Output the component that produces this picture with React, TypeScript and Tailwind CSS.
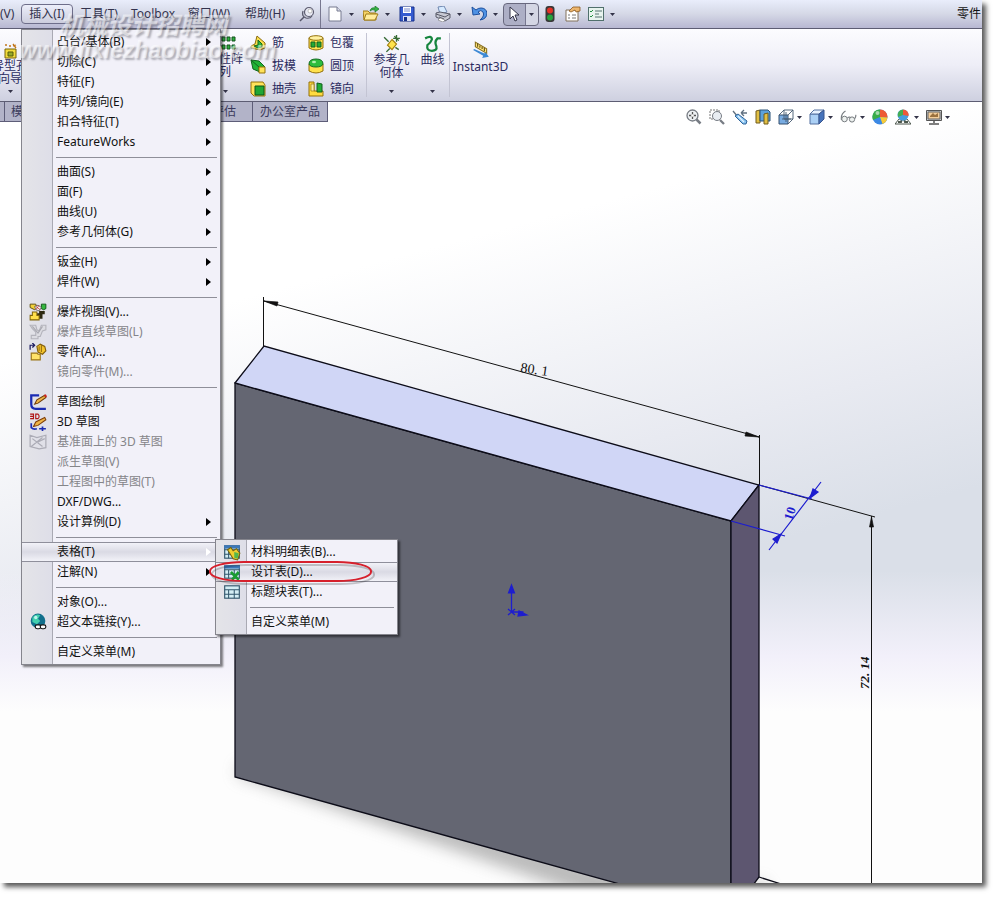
import type { ReactNode } from 'react';

type MenuEntry = {
  label: string;
  icon?: ReactNode;
  arrow?: boolean;
  disabled?: boolean;
  active?: boolean;
  children?: (MenuEntry | null)[];
};

function Svg({ children, className = 'size-4' }: { children: ReactNode; className?: string }) {
  return (
    <svg viewBox="0 0 16 16" className={`${className} shrink-0`} fill="none" aria-hidden="true">
      {children}
    </svg>
  );
}

function Caret() {
  return (
    <svg viewBox="0 0 5 3" className="h-[3px] w-[5px] shrink-0" aria-hidden="true">
      <path d="M0 0h5L2.5 3z" fill="#333348" />
    </svg>
  );
}

/* ---------- menu icons ---------- */

const explodeView = (
  <Svg className="size-[18px]">
    <path d="M9 7h5v3h-2v4H7V9h2z" fill="#2d2a12" />
    <path d="M1 1h5l1 3-2 2-4-2z" fill="#f2d23a" stroke="#5a4708" strokeWidth=".8" />
    <path d="M11 1h4v4l-2 1-2-1z" fill="#35b83f" stroke="#0b5413" strokeWidth=".8" />
    <path d="M3 8h4v3h2v4H1v-4h2z" fill="#ffe04a" stroke="#80640a" strokeWidth=".9" />
    <path d="M5 3l3-1 3 2-2 3-3-1z" fill="#f4f4f4" stroke="#555" strokeWidth=".7" />
    <path d="M6 3l4 3M9 2L6 6" stroke="#b33" strokeWidth=".7" />
  </Svg>
);

const explodeLine = (
  <Svg className="size-[18px]">
    <path d="M1 2h5l1 4 2 1 2-5h4v4l-3 1-2 5H8v2H2v-3h4V8L3 5z" stroke="#b4b4bc" fill="#dcdce2" />
    <path d="M3 3l5 6 4-6" stroke="#a8a8b0" />
  </Svg>
);

const partIcon = (
  <Svg className="size-[18px]">
    <path d="M1 6V2h3M3 0l2 2-2 2" stroke="#1b1b60" strokeWidth="1.1" />
    <path d="M7 3l3-2 4 2 1 4-3 3-4-2z" fill="#f3c32c" stroke="#85600a" />
    <path d="M9 3v4M11 2v6" stroke="#85600a" strokeWidth=".8" />
    <path d="M2 9h5l1 1h2v5H2z" fill="#ffe36a" stroke="#9a7415" />
  </Svg>
);

const sketchIcon = (
  <Svg className="size-[18px]">
    <path d="M9 2H2v8q0 4 4 4h9" stroke="#1a2bb2" strokeWidth="2" />
    <path d="M5 10l2-4 7-4 1 2-7 5z" fill="#efb445" stroke="#6e3c08" strokeWidth=".9" />
    <path d="M13 2l2-1 1 2-1 1z" fill="#c22" />
  </Svg>
);

const sketch3dIcon = (
  <Svg className="size-[18px]">
    <path d="M1 1h3v4H1M1 3h3M6 1h2q2 2 0 4H6z" stroke="#b01515" strokeWidth="1" />
    <path d="M2 9v4q2 2 5 1M9 14h6M12 12v4" stroke="#1a2bb2" strokeWidth="1.5" />
    <path d="M4 12l2-4 8-4 1 2-7 5z" fill="#efb445" stroke="#7e3d08" strokeWidth=".9" />
  </Svg>
);

const planeSketchIcon = (
  <Svg className="size-[18px]">
    <path d="M1 2l6 2 8-2v11l-6 1-8-2zM2 12l10-8M3 5l9 7M8 8l6-3" stroke="#acacb6" strokeWidth="1.1" />
  </Svg>
);

const globeIcon = (
  <Svg className="size-[18px]">
    <circle cx="8" cy="7" r="6.5" fill="#126f8c" />
    <path d="M3 4q3-4 7-2l-2 3 2 2-3 3-4-2z" fill="#42d0ae" />
    <circle cx="6" cy="4" r="1.5" fill="#bff4ee" />
    <rect x="5.5" y="10.5" width="5" height="3.5" rx="1.7" stroke="#111" fill="#fff" />
    <rect x="10" y="10.5" width="5" height="3.5" rx="1.7" stroke="#111" fill="#fff" />
  </Svg>
);

function TableIcon({ mark }: { mark?: 'bom' | 'design' }) {
  return (
    <Svg className="size-[18px]">
      <rect x="1.5" y="2.5" width="13" height="11" fill="#d4eef4" stroke="#31566b" />
      {mark && <path d="M1 2h14v3H1z" fill="#3c78b8" />}
      <path d="M1.5 6h13M1.5 10h13M5 6v7.500M10 6v7.500" stroke="#31566b" strokeWidth=".9" />
      {mark === 'bom' && <path d="M4 6l3-2 2 3 3-2 3 4-2 6-4-1z" fill="#f0ce30" stroke="#746009" strokeWidth=".9" />}
      {mark === 'bom' && <path d="M10 8l4 1-1 5-3-1z" fill="#54b74c" />}
      {mark === 'design' && <path d="M7 8l7 7M14 8l-6 7" stroke="#199c32" strokeWidth="2.4" />}
    </Svg>
  );
}

/* ---------- menus ---------- */

const tableMenu: (MenuEntry | null)[] = [
  { label: '材料明细表(B)...', icon: <TableIcon mark="bom" /> },
  { label: '设计表(D)...', icon: <TableIcon mark="design" />, active: true },
  { label: '标题块表(T)...', icon: <TableIcon /> },
  null,
  { label: '自定义菜单(M)' },
];

const insertMenu: (MenuEntry | null)[] = [
  { label: '凸台/基体(B)', arrow: true },
  { label: '切除(C)', arrow: true },
  { label: '特征(F)', arrow: true },
  { label: '阵列/镜向(E)', arrow: true },
  { label: '扣合特征(T)', arrow: true },
  { label: 'FeatureWorks', arrow: true },
  null,
  { label: '曲面(S)', arrow: true },
  { label: '面(F)', arrow: true },
  { label: '曲线(U)', arrow: true },
  { label: '参考几何体(G)', arrow: true },
  null,
  { label: '钣金(H)', arrow: true },
  { label: '焊件(W)', arrow: true },
  null,
  { label: '爆炸视图(V)...', icon: explodeView },
  { label: '爆炸直线草图(L)', icon: explodeLine, disabled: true },
  { label: '零件(A)...', icon: partIcon },
  { label: '镜向零件(M)...', disabled: true },
  null,
  { label: '草图绘制', icon: sketchIcon },
  { label: '3D 草图', icon: sketch3dIcon },
  { label: '基准面上的 3D 草图', icon: planeSketchIcon, disabled: true },
  { label: '派生草图(V)', disabled: true },
  { label: '工程图中的草图(T)', disabled: true },
  { label: 'DXF/DWG...' },
  { label: '设计算例(D)', arrow: true },
  null,
  { label: '表格(T)', arrow: true, active: true, children: tableMenu },
  { label: '注解(N)', arrow: true },
  null,
  { label: '对象(O)...' },
  { label: '超文本链接(Y)...', icon: globeIcon },
  null,
  { label: '自定义菜单(M)' },
];

function Menu({ items, className }: { items: (MenuEntry | null)[]; className: string }) {
  return (
    <ul
      className={`absolute border border-[#85858d] bg-[linear-gradient(to_right,#e4e4e8_0,#dedee8_30px,#a9a9b3_30px,#a9a9b3_31px,#f2f1f9_31px)] py-0.5 shadow-[2px_2px_2px_rgba(0,0,0,0.5)] ${className}`}
    >
      {items.map((item, i) =>
        item === null ? (
          <li key={i} className="flex h-2.5 items-center pr-[3px] pl-[34px]">
            <div className="h-px w-full bg-[#8f8f99]" />
          </li>
        ) : (
          <li key={i} className="relative">
            <button
              disabled={item.disabled}
              className={`flex h-5 w-full items-center text-left ${
                item.active
                  ? 'border-y border-[#8f8f9b] bg-linear-to-b from-[#f2f2f8] via-[#dadae4] to-[#f2f2f8]'
                  : ''
              } ${item.disabled ? 'text-[#858589]' : 'text-[#111]'}`}
            >
              <span className="flex w-[30px] shrink-0 justify-center pl-px">{item.icon}</span>
              <span className="grow pl-[5px] leading-5 whitespace-nowrap">{item.label}</span>
              {item.arrow && (
                <svg viewBox="0 0 5 8" className="mr-[9px] h-2 w-[5px]" aria-hidden="true">
                  <path d="M0 0l5 4-5 4z" fill={item.active ? '#fff' : '#000'} />
                </svg>
              )}
            </button>
            {item.children && <Menu items={item.children} className="-top-[3px] left-[193px] z-10 w-[183px]" />}
          </li>
        ),
      )}
    </ul>
  );
}

/* ---------- title bar ---------- */

const quickTools: { name: string; icon: ReactNode }[] = [
  {
    name: 'New',
    icon: (
      <Svg>
        <path d="M2 1h8l4 4v10H2z" fill="#fff" stroke="#777b90" />
        <path d="M10 1v4h4" fill="#d9dcea" stroke="#777b90" />
      </Svg>
    ),
  },
  {
    name: 'Open',
    icon: (
      <Svg>
        <path d="M0 5h5l2 2h6v7H1z" fill="#f4d267" stroke="#a07c19" />
        <path d="M3 8h12l-3 6H1z" fill="#ffec9c" stroke="#a07c19" />
        <path d="M7 5q1-4 5-3V0l4 3-4 3V4q-3-1-5 1z" fill="#36b545" stroke="#197328" strokeWidth=".7" />
      </Svg>
    ),
  },
  {
    name: 'Save',
    icon: (
      <Svg>
        <path d="M1 1h14v14H1z" fill="#355bd0" stroke="#17308a" />
        <path d="M4 1h8v6H4z" fill="#fff" />
        <path d="M5 3h6M5 5h6" stroke="#7a8ccc" />
        <path d="M4 10h8v5H4z" fill="#d8def2" />
        <path d="M5 11h3v4H5z" fill="#17308a" />
      </Svg>
    ),
  },
  {
    name: 'Print',
    icon: (
      <Svg>
        <path d="M3 1l6-1 3 6-7 2z" fill="#d6eaff" stroke="#7088b0" />
        <path d="M1 7l4-1 10 2v4l-5 3-9-4z" fill="#c8cad4" stroke="#585a68" />
        <path d="M1 8l9 3 5-3M4 11l5 2" stroke="#585a68" />
        <path d="M5 12l5 2-2 2-5-2z" fill="#fff" stroke="#777" strokeWidth=".6" />
      </Svg>
    ),
  },
  {
    name: 'Undo',
    icon: (
      <Svg>
        <path d="M1 1l1 8 7-1-2-2q3-3 5 0 2 4-3 8 7-1 7-7-1-5-6-5-3 0-5 2z" fill="#4e92e4" stroke="#1e509e" />
      </Svg>
    ),
  },
];

function TitleBar() {
  return (
    <header className="flex h-7 items-center bg-linear-to-b from-[#e9edfb] via-[#d5d8e6] to-[#b8b8d2] text-[#33334e]">
      <nav className="flex items-center">
        <button className="w-[21px] text-left">(V)</button>
        <button className="h-5 w-[52px] rounded-[4px] border border-[#6e6e8a] bg-linear-to-b from-[#eceefa] to-[#cccddd]">
          插入(I)
        </button>
        <button className="w-[52px]">工具(T)</button>
        <button className="w-[56px]">Toolbox</button>
        <button className="w-[56px]">窗口(W)</button>
        <button className="w-[56px]">帮助(H)</button>
      </nav>
      <button aria-label="Pin" className="flex w-[27px] justify-center">
        <Svg>
          <path d="M1 15l5-5" stroke="#555568" strokeWidth="1.500" />
          <path d="M4 5q-2 5 3 7 4 1 6-2" fill="#c4c6d4" stroke="#5c5c70" strokeWidth="1.200" />
          <circle cx="10" cy="6" r="4.500" fill="#e8e9f3" stroke="#5c5c70" strokeWidth="1.200" />
          <circle cx="11" cy="5" r="2" fill="#fff" stroke="#999" strokeWidth=".6" />
        </Svg>
      </button>
      <div className="mr-1.5 h-full w-px bg-[#77778f]" />
      {quickTools.map((tool) => (
        <button key={tool.name} aria-label={tool.name} className="flex w-9 items-center gap-1.5">
          {tool.icon}
          <Caret />
        </button>
      ))}
      <button
        aria-label="Select"
        className="ml-[-4px] flex h-[23px] w-9 items-center rounded-[4px] border border-[#68687e] bg-[linear-gradient(to_right,#adafc6_21px,#777790_21px,#777790_22px,#d4d6e4_22px)] pl-0.5"
      >
        <Svg className="mr-[7px] h-4 w-4">
          <path d="M4 1v12l3-3 2 5 2-1-2-5h4z" fill="#fff" stroke="#333348" />
        </Svg>
        <Caret />
      </button>
      <button aria-label="Rebuild" className="flex w-[22px] justify-center">
        <Svg>
          <rect x="3.500" y="0" width="9" height="16" rx="3" fill="#393939" />
          <circle cx="8" cy="4.500" r="3" fill="#e33127" />
          <circle cx="8" cy="11.500" r="3" fill="#25a33c" />
        </Svg>
      </button>
      <button aria-label="File properties" className="flex w-6 justify-center">
        <Svg>
          <path d="M1 4h12v11H1z" fill="#fff" stroke="#81705b" />
          <path d="M3 9h2M7 9h4M3 12h2M7 12h4" stroke="#777" />
          <path d="M4 5l4-4h7v4l-4 1-1-2-4 2z" fill="#edb66e" stroke="#8b5920" strokeWidth=".8" />
        </Svg>
      </button>
      <button aria-label="Options" className="flex w-[34px] items-center gap-1.5 pl-[3px]">
        <Svg>
          <rect x=".5" y="1.500" width="15" height="13" fill="#e7f3ee" stroke="#50706c" />
          <path d="M2 5l1 1 2-2M2 10l1 1 2-2" stroke="#258f42" />
          <path d="M7 5h7M7 8h4M7 11h7" stroke="#547270" />
        </Svg>
        <Caret />
      </button>
      <span className="ml-auto pr-px text-[#111]">零件</span>
    </header>
  );
}

/* ---------- ribbon ---------- */

type Feature = { label: string; icon: ReactNode };

const featureColumns: Feature[][] = [
  [
    {
      label: '筋',
      icon: (
        <Svg>
          <path d="M1 11l4-2 2-8 8 7v5l-5 2-9-2z" fill="#fae04c" stroke="#8a6a0d" />
          <path d="M4 11l4-1V5l4 4v3l-4 1z" fill="#2fb73c" stroke="#176422" />
        </Svg>
      ),
    },
    {
      label: '拔模',
      icon: (
        <Svg>
          <path d="M1 2l8 1 6 6-5 5-7-3z" fill="#20b335" stroke="#10641c" />
          <path d="M1 2l8 7M9 9v5" stroke="#10641c" />
          <path d="M9 9h6v6H9z" fill="#ffe25a" stroke="#94720d" />
        </Svg>
      ),
    },
    {
      label: '抽壳',
      icon: (
        <Svg>
          <path d="M1 1h12l2 3v11H4l-3-3z" fill="#ffe25a" stroke="#94720d" />
          <path d="M5 5h9v9H5z" fill="#20a734" stroke="#0d5518" />
        </Svg>
      ),
    },
  ],
  [
    {
      label: '包覆',
      icon: (
        <Svg>
          <path d="M1 3v10q7 4 14 0V3z" fill="#ffe14d" stroke="#93700b" />
          <ellipse cx="8" cy="3" rx="7" ry="2.300" fill="#fff1a2" stroke="#93700b" />
          <path d="M3 7h4v5H3zM9 7h4v5H9z" fill="#24ab35" stroke="#146322" />
        </Svg>
      ),
    },
    {
      label: '圆顶',
      icon: (
        <Svg>
          <path d="M1 6v7q7 4 14 0V6z" fill="#ffe14d" stroke="#93700b" />
          <path d="M1 6q0-5 7-5t7 5q-1 3-7 3t-7-3z" fill="#2dbd3d" stroke="#156c23" />
          <ellipse cx="6" cy="4" rx="2" ry="1.200" fill="#b0f0ae" />
        </Svg>
      ),
    },
    {
      label: '镜向',
      icon: (
        <Svg>
          <path d="M1 1h5v9h9v5H1z" fill="#ffdb3f" stroke="#93700b" />
          <path d="M3 3h3v7H3z" fill="#fff1a2" stroke="#93700b" strokeWidth=".7" />
          <path d="M9 2l5 1v8H9z" fill="#23ad37" stroke="#125e1d" />
        </Svg>
      ),
    },
  ],
];

function TallButton({ icon, lines, className }: { icon: ReactNode; lines: string[]; className: string }) {
  return (
    <button className={`flex h-full shrink-0 flex-col items-center leading-[13px] whitespace-nowrap ${className}`}>
      {icon}
      {lines.map((line) => (
        <span key={line}>{line}</span>
      ))}
      <span className="mt-auto pb-2">
        <Caret />
      </span>
    </button>
  );
}

function Ribbon() {
  return (
    <section className="flex h-[74px] overflow-hidden border-y border-[#5d5d73] bg-linear-to-b from-[#fcfcff] via-[#eeeef7] to-[#ced0e0] text-[#2b2b60]">
      <TallButton
        className="-ml-[15px] w-[50px] pt-3.5"
        lines={['异型孔', '向导']}
        icon={
          <Svg>
            <path d="M3 6h11v9H3z" fill="#f1dc3c" stroke="#7b650a" />
            <path d="M6 9h5v4H6z" fill="#95a927" stroke="#565a0a" />
            <path d="M3 2h2M7 3h2M11 1l3 4M14 2l-3 1" stroke="#c1751b" strokeWidth="1.3" />
          </Svg>
        }
      />
      <TallButton
        className="ml-[167px] w-[46px] pt-[7px]"
        lines={['线性阵', '列']}
        icon={
          <Svg className="ml-2 size-4">
            <path
              d="M1 1h3v4H1zM6 1h3v4H6zM11 1h3v4h-3zM1 9h3v4H1zM6 9h3v4H6zM11 9h3v4h-3z"
              fill="#2bb33c"
              stroke="#14501c"
            />
          </Svg>
        }
      />
      <div className="ml-0.5 flex">
        {featureColumns.map((column, i) => (
          <div key={i} className="flex w-[58px] flex-col pt-0.5">
            {column.map((feature) => (
              <button key={feature.label} className="flex h-[23px] items-center gap-1.5">
                {feature.icon}
                {feature.label}
              </button>
            ))}
          </div>
        ))}
      </div>
      <div className="my-1 w-px bg-[#c3c4d3]" />
      <TallButton
        className="w-[49px] pt-1.5"
        lines={['参考几', '何体']}
        icon={
          <Svg className="size-[18px]">
            <path d="M1 2l4 4M14 13l-3-2M3 15l3-3M12 0v6M9 3h6M10 1l4 4" stroke="#376b35" strokeWidth="1.200" />
            <path d="M8 4l4 4-4 5-4-4z" fill="#ffe34c" stroke="#a17d0c" />
          </Svg>
        }
      />
      <TallButton
        className="w-[33px] pt-1.5"
        lines={['曲线']}
        icon={
          <Svg className="size-[18px]">
            <path d="M1 3q6-3 6 1-1 3-4 5-1 5 4 5 5 0 4-4-2-4 1-7h3" stroke="#16853e" strokeWidth="2" />
          </Svg>
        }
      />
      <div className="my-1 w-px bg-[#c3c4d3]" />
      <button className="flex w-[61px] flex-col items-center pt-3 leading-4">
        <Svg className="size-[18px]">
          <path d="M3 1l10 6v4L3 5z" fill="#ffe577" stroke="#8c721f" />
          <path d="M5 2v3M7 4v2M9 5v2M11 6v3" stroke="#675318" />
          <path d="M1 8l9 5-1 2 6-1-3-4-1 1-9-4z" fill="#3d89d5" />
        </Svg>
        Instant3D
      </button>
    </section>
  );
}

/* ---------- view toolbar ---------- */

const viewTools: { name: string; icon: ReactNode; more?: boolean }[] = [
  {
    name: 'Zoom to fit',
    icon: (
      <Svg>
        <circle cx="6.500" cy="6.500" r="5.500" fill="#eef1f4" stroke="#777c84" strokeWidth="1.300" />
        <path d="M10.500 10.500l4 4" stroke="#777c84" strokeWidth="2.500" />
        <path d="M6.500 3v7M3 6.500h7" stroke="#555" strokeWidth="1.300" />
        <circle cx="6.500" cy="6.500" r="1.300" fill="#fff" />
      </Svg>
    ),
  },
  {
    name: 'Zoom to area',
    icon: (
      <Svg>
        <path d="M1 1h9v9H1z" stroke="#777" strokeDasharray="2 1" />
        <circle cx="8" cy="7" r="4.500" fill="#e9edf2" stroke="#777c84" />
        <path d="M11 11l4 4" stroke="#777c84" strokeWidth="2.300" />
      </Svg>
    ),
  },
  {
    name: 'Previous view',
    icon: (
      <Svg>
        <path d="M1 2l5 6M9 4h6M9 4l3-3M9 4l3 3" stroke="#607080" strokeWidth="1.300" />
        <path d="M3 7l3-2 9 7-1 3h-3z" fill="#86c1ef" stroke="#30649a" />
        <path d="M6 7l6 6" stroke="#e4f4ff" strokeWidth="1.200" />
      </Svg>
    ),
  },
  {
    name: 'Section view',
    icon: (
      <Svg>
        <path d="M1 2l4-1v13H1z" fill="#e1bf43" stroke="#715c1c" />
        <path d="M5 1h8l2 2v9H5z" fill="#5ca2db" stroke="#2b5278" />
        <path d="M9 5l4-1v11H9z" fill="#e1bf43" stroke="#715c1c" />
      </Svg>
    ),
  },
  {
    name: 'View orientation',
    more: true,
    icon: (
      <Svg>
        <path d="M1 6h9v9H1z" fill="#79ace2" stroke="#36506f" />
        <path d="M1 6l5-5h9v9l-5 5M10 6l5-5M6 1v9h9M8 3v10M4 10h9" stroke="#445970" strokeWidth=".9" />
      </Svg>
    ),
  },
  {
    name: 'Display style',
    more: true,
    icon: (
      <Svg>
        <path d="M1 5h9v10H1z" fill="#abd0f5" stroke="#5471a0" />
        <path d="M1 5l4-4h10l-5 4z" fill="#e7f2ff" stroke="#5471a0" />
        <path d="M10 5l5-4v9l-5 5z" fill="#4774bc" stroke="#39568f" />
      </Svg>
    ),
  },
  {
    name: 'Hide/show items',
    more: true,
    icon: (
      <Svg className="h-4 w-[17px]">
        <path d="M5 2q-5 3-4 9M7 9q2-2 3 0M14 10q2-3 1-4" stroke="#777c80" strokeWidth="1.200" />
        <circle cx="4" cy="10" r="2.800" fill="#edf1ef" stroke="#777c80" />
        <circle cx="11.500" cy="10.500" r="2.600" fill="#edf1ef" stroke="#777c80" />
      </Svg>
    ),
  },
  {
    name: 'Edit appearance',
    icon: (
      <Svg>
        <circle cx="8" cy="8" r="7.500" fill="#3c89e4" />
        <path d="M8 8V.5A7.500 7.500 0 0 0 1 11z" fill="#39ad49" />
        <path d="M8 8V.5a7.500 7.500 0 0 1 7.500 8z" fill="#ee5a35" />
        <path d="M8 8l7.500.5q-1 5-5 6.500z" fill="#f7ca38" />
        <circle cx="5.500" cy="4" r="2" fill="#fff" opacity=".55" />
      </Svg>
    ),
  },
  {
    name: 'Apply scene',
    more: true,
    icon: (
      <Svg>
        <path d="M0 15l4-5h8l4 5z" fill="#fff" stroke="#4c574d" />
        <path d="M3 13h3l1-3M9 10l1 3h3" stroke="#4c574d" strokeWidth="2" />
        <circle cx="8" cy="6" r="5.500" fill="#459edf" />
        <path d="M8 6V.5A5.500 5.500 0 0 0 3 8z" fill="#45ae50" />
        <path d="M8 6V.5A5.500 5.500 0 0 1 13.500 7z" fill="#ef5938" />
      </Svg>
    ),
  },
  {
    name: 'View settings',
    more: true,
    icon: (
      <Svg>
        <path d="M.5 1.500h15v10H.5z" fill="#c6c9cc" stroke="#555" />
        <path d="M2 3h12v7H2z" fill="#f5ce9a" stroke="#666" />
        <path d="M4 7l3-3 2 2 3-2v4H4z" fill="#9b713e" />
        <path d="M8 12v2M3 15h10" stroke="#555" strokeWidth="1.500" />
      </Svg>
    ),
  },
];

function TabRow() {
  return (
    <div className="relative flex items-start justify-between">
      <div className="flex h-5 border-r border-b border-[#5d5d78] bg-[#b2b3c8] text-[#3b3b5c]">
        <button className="w-[5px] border-r border-[#5d5d78]" aria-label="特征" />
        <button className="w-[191px] pl-1.5 text-left leading-5">模具工具</button>
        <button className="w-[57px] border-r border-[#5d5d78] pr-4 text-right leading-5">评估</button>
        <button className="w-[74px] leading-5">办公室产品</button>
      </div>
      <div className="mt-[7px] mr-8 flex items-center gap-[7px]">
        {viewTools.map((tool) => (
          <button key={tool.name} aria-label={tool.name} className="flex items-center gap-[3px]">
            {tool.icon}
            {tool.more && <Caret />}
          </button>
        ))}
      </div>
    </div>
  );
}

/* ---------- model ---------- */

function Model() {
  return (
    <svg className="absolute inset-0 size-full" aria-hidden="true">
      <defs>
        <filter id="soft" x="-20%" y="-20%" width="140%" height="140%">
          <feGaussianBlur stdDeviation="8" />
        </filter>
      </defs>
      <g transform="translate(0 -102)" strokeWidth="1.300">
        <path d="M240 765l27 5 460 135 34-25 14 30-60 30-478-165z" fill="#777" opacity=".5" filter="url(#soft)" />
        <path d="M235 383L731 521V915L235 777z" fill="#646672" stroke="#0c0c18" />
        <path d="M235 383L264 346 759 485 731 521z" fill="#d0d6f6" stroke="#0c0c18" />
        <path d="M731 521L759 485V877L731 915z" fill="#5d5670" stroke="#0c0c18" />
        <path d="M759 877l22 7" stroke="#0c0c18" />

        <g stroke="#111" strokeWidth="1" fill="#111">
          <path d="M263.500 297v49M264 301L759 437M759.500 435v50M759 485l116 32M871.500 516v370" fill="none" />
          <path d="M264 301l14 1-1 4zM759 437l-13-5-1 4zM871.500 517l-2 10h4z" strokeWidth=".7" />
        </g>
        <text
          transform="translate(520 372) rotate(8)"
          className="fill-[#111] font-['Liberation_Serif',serif] text-[14px] font-medium"
        >
          80. 1
        </text>
        <text
          transform="translate(869 689) rotate(-90)"
          className="fill-[#111] font-['Liberation_Serif',serif] text-[13px] font-bold italic"
        >
          72. 14
        </text>

        <g stroke="#1d1dcf" strokeWidth="1.200" fill="#1d1dcf">
          <path d="M731 521l54 15M759 485l53 14M821 482l-52 68" fill="none" />
          <path d="M810 498l3-9 5 3zM781 534l-8 5 4 4z" />
          <path d="M511.500 612v-24M511.500 612h12M508 609l7 6M515 609l-7 6" fill="none" strokeWidth="1.300" />
          <path d="M511.500 585l-3 8h6zM527 615l-8-4-1 5z" />
        </g>
        <text
          transform="translate(792 521) rotate(-72)"
          className="fill-[#1d1dcf] font-['Liberation_Serif',serif] text-[13px] font-bold"
        >
          10
        </text>
      </g>
    </svg>
  );
}

function Watermark() {
  return (
    <div className="pointer-events-none absolute top-3 left-[19px] z-30 font-bold whitespace-nowrap text-white/50 italic [text-shadow:2px_2px_2px_rgba(70,70,80,0.4)]">
      <p className="pl-10 text-2xl leading-[26px]">机械设计招聘网</p>
      <p className="font-['Liberation_Sans',sans-serif] text-[23px] leading-6">www.jixiezhaobiao.com</p>
    </div>
  );
}

export default function App() {
  return (
    <div className="flex min-h-screen bg-white pr-[15px] pb-[15px] font-['Noto_Sans','Noto_Sans_CJK_SC',sans-serif] text-xs">
      <div className="relative flex min-w-0 grow flex-col bg-white shadow-[4px_4px_5px_rgba(0,0,0,0.65)]">
        <TitleBar />
        <Ribbon />
        <main className="relative grow overflow-hidden bg-[linear-gradient(to_bottom,transparent_60%,#f2f0fa_71%,#fdfdfd_78%),linear-gradient(165deg,#fff_25%,#e8eaf1_49%,#dadfe8_62%)]">
          <Model />
          <TabRow />
        </main>

        <Menu items={insertMenu} className="top-[29px] left-[21px] z-20 w-[200px]" />

        {/* highlight around the design table entry */}
        <svg className="pointer-events-none absolute top-[556px] left-[203px] z-30 h-9 w-[180px]" aria-hidden="true">
          <rect x="9" y="9" width="162" height="19" rx="34" ry="9" fill="none" stroke="#000" strokeWidth="2" opacity=".2" />
          <rect x="7" y="6" width="161" height="19" rx="34" ry="9" fill="none" stroke="#d6202c" strokeWidth="2" />
        </svg>
        <Watermark />
      </div>
    </div>
  );
}
